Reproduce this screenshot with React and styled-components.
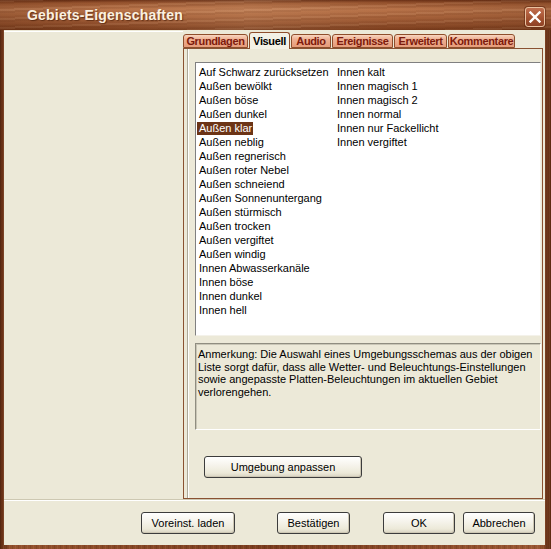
import React from 'react';
import styled, { createGlobalStyle } from 'styled-components';

const Global = createGlobalStyle`
  html, body { margin: 0; padding: 0; background: #6b3318; }
  body { width: 551px; height: 549px; overflow: hidden; font-family: "Liberation Sans", Arial, sans-serif; }
  * { box-sizing: border-box; }
`;

const Window = styled.div`
  width: 551px;
  height: 549px;
  display: flex;
  flex-direction: column;
  background:
    repeating-linear-gradient(90deg, rgba(0,0,0,0.10) 0 1px, transparent 1px 3px, rgba(255,220,180,0.08) 3px 4px, transparent 4px 6px),
    linear-gradient(90deg, #5e2a12 0%, #93502c 2%, #7a3c1e 50%, #9a5632 98%, #5a2810 100%);
`;

const TitleBar = styled.div`
  height: 30px;
  display: flex;
  align-items: flex-start;
  padding: 0 6px 0 27px;
  background:
    repeating-linear-gradient(178deg, rgba(255,230,200,0.07) 0 2px, rgba(60,20,0,0.08) 2px 4px, transparent 4px 7px, rgba(60,20,0,0.05) 7px 9px),
    linear-gradient(90deg, rgba(60,20,0,0.18) 0%, rgba(0,0,0,0) 20%, rgba(255,220,180,0.10) 45%, rgba(0,0,0,0) 70%, rgba(60,20,0,0.15) 100%),
    linear-gradient(180deg, #6a3016 0%, #9a5630 10%, #b9744a 30%, #a9643c 55%, #93512d 80%, #7a3c1c 100%);
`;

const Title = styled.span`
  margin-top: 7px;
  font-family: "Liberation Sans", Arial, sans-serif;
  font-weight: bold;
  font-size: 14px;
  letter-spacing: 0.2px;
  color: #fbf1e0;
  text-shadow: 1px 1px 1px rgba(60, 20, 0, 0.6);
`;

const CloseButton = styled.div`
  margin-left: auto;
  margin-top: 7px;
  width: 20px;
  height: 20px;
  border: 1px solid #e9c2a0;
  border-radius: 3px;
  background: linear-gradient(180deg, #c27050 0%, #a2502e 60%, #8e4226 100%);
  display: flex;
  align-items: center;
  justify-content: center;
  box-shadow: 0 0 0 1px rgba(90, 30, 10, 0.5);
`;

const Client = styled.div`
  flex: 1;
  margin: 0 6px 4px 4px;
  background: #ece9d8;
  display: flex;
  flex-direction: column;
`;

const Main = styled.div`
  height: 470px;
  display: flex;
  border-bottom: 1px solid #cdc8b2;
`;

const LeftPane = styled.div`
  width: 179px;
  border-top: 1px solid #ffffff;
  margin-top: 1px;
`;

const TabArea = styled.div`
  flex: 1;
  margin-right: 2px;
  padding-top: 4px;
  display: flex;
  flex-direction: column;
`;

const TabStrip = styled.div`
  height: 14px;
  display: flex;
  align-items: flex-end;
  gap: 1px;
  position: relative;
  z-index: 1;
`;

const Tab = styled.div`
  width: ${p => p.$w}px;
  height: ${p => (p.$active ? 17 : 14)}px;
  margin-bottom: ${p => (p.$active ? -1 : 0)}px;
  border: 1px solid #8e4e2c;
  border-bottom: ${p => (p.$active ? 'none' : '1px solid #8e4e2c')};
  border-radius: 3px 3px 0 0;
  background: ${p => (p.$active
    ? '#f3f1e6'
    : 'linear-gradient(180deg, #f8d6c0 0%, #eeb093 35%, #e69b79 100%)')};
  color: ${p => (p.$active ? '#000' : '#7e1a0c')};
  font-weight: bold;
  font-size: 11px;
  line-height: 12px;
  padding-top: ${p => (p.$active ? 2 : 0)}px;
  text-align: center;
  white-space: nowrap;
  letter-spacing: -0.35px;
  overflow: hidden;
`;

const Panel = styled.div`
  flex: 1;
  border: 1px solid #8a5232;
  background: #ece9d8;
  display: flex;
`;

const PanelInner = styled.div`
  flex: 1;
  margin-left: 3px;
  border-left: 1px solid #aca899;
  box-shadow: inset 1px 0 #ffffff;
  padding: 13px 1px 0 7px;
  display: flex;
  flex-direction: column;
`;

const ListBox = styled.div`
  height: 274px;
  background: #ffffff;
  border-top: 1px solid #808080;
  border-left: 1px solid #808080;
  border-right: 1px solid #f4f2ea;
  border-bottom: 1px solid #f4f2ea;
  padding: 3px 0 0 1px;
  display: grid;
  grid-auto-flow: column;
  grid-template-rows: repeat(18, 14px);
  grid-auto-columns: 138px;
  align-content: start;
`;

const Item = styled.div`
  justify-self: start;
  height: 13px;
  line-height: 13px;
  padding: 0 1px 0 2px;
  font-size: 11px;
  white-space: nowrap;
  color: ${p => (p.$sel ? '#ffffff' : '#000000')};
  background: ${p => (p.$sel ? '#6c3416' : 'transparent')};
`;

const Note = styled.div`
  margin-top: 7px;
  height: 87px;
  border-top: 1px solid #8f8d80;
  border-left: 1px solid #8f8d80;
  border-right: 1px solid #ffffff;
  border-bottom: 1px solid #ffffff;
  box-shadow: inset 1px 1px 0 #c9c6b6;
  padding: 4px 2px 0 2px;
  font-size: 11px;
  line-height: 12.5px;
  color: #000;
`;

const NoteLine = styled.span`
  display: block;
  white-space: nowrap;
`;

const Button = styled.button`
  width: ${p => p.$w}px;
  height: 22px;
  margin-left: ${p => p.$ml || 0}px;
  margin-top: ${p => p.$mt || 0}px;
  padding: 0;
  border: 1px solid #3c3c3c;
  border-radius: 3px;
  background: linear-gradient(180deg, #ffffff 0%, #f6f4ec 40%, #ece9d8 80%, #d8d3c2 100%);
  box-shadow: inset -1px -1px 0 #cdc7b4;
  font-family: "Liberation Sans", Arial, sans-serif;
  font-size: 11px;
  color: #000;
  flex: none;
`;

const Footer = styled.div`
  flex: 1;
  border-top: 1px solid #ffffff;
  display: flex;
  align-items: flex-start;
  justify-content: flex-end;
  padding: 11px 10px 0 0;
`;

const tabs = [
  { label: 'Grundlagen', w: 65 },
  { label: 'Visuell', w: 41, active: true },
  { label: 'Audio', w: 40 },
  { label: 'Ereignisse', w: 61 },
  { label: 'Erweitert', w: 53 },
  { label: 'Kommentare', w: 67 },
];

const items = [
  'Auf Schwarz zurücksetzen', 'Außen bewölkt', 'Außen böse', 'Außen dunkel', 'Außen klar',
  'Außen neblig', 'Außen regnerisch', 'Außen roter Nebel', 'Außen schneiend',
  'Außen Sonnenuntergang', 'Außen stürmisch', 'Außen trocken', 'Außen vergiftet',
  'Außen windig', 'Innen Abwasserkanäle', 'Innen böse', 'Innen dunkel', 'Innen hell',
  'Innen kalt', 'Innen magisch 1', 'Innen magisch 2', 'Innen normal',
  'Innen nur Fackellicht', 'Innen vergiftet',
];

const noteLines = [
  'Anmerkung: Die Auswahl eines Umgebungsschemas aus der obigen',
  'Liste sorgt dafür, dass alle Wetter- und Beleuchtungs-Einstellungen',
  'sowie angepasste Platten-Beleuchtungen im aktuellen Gebiet',
  'verlorengehen.',
];

export default function App() {
  return (
    <>
      <Global />
      <Window>
        <TitleBar>
          <Title>Gebiets-Eigenschaften</Title>
          <CloseButton>
            <svg width="12" height="12" viewBox="0 0 12 12">
              <path d="M1.5 1.5 L10.5 10.5 M10.5 1.5 L1.5 10.5" stroke="#ffffff" strokeWidth="2.4" strokeLinecap="square" />
            </svg>
          </CloseButton>
        </TitleBar>
        <Client>
          <Main>
            <LeftPane />
            <TabArea>
              <TabStrip>
                {tabs.map(t => (
                  <Tab key={t.label} $w={t.w} $active={t.active}>{t.label}</Tab>
                ))}
              </TabStrip>
              <Panel>
                <PanelInner>
                  <ListBox>
                    {items.map(it => (
                      <Item key={it} $sel={it === 'Außen klar'}>{it}</Item>
                    ))}
                  </ListBox>
                  <Note>
                    {noteLines.map(l => <NoteLine key={l}>{l}</NoteLine>)}
                  </Note>
                  <Button $w={158} $ml={9} $mt={26}>Umgebung anpassen</Button>
                </PanelInner>
              </Panel>
            </TabArea>
          </Main>
          <Footer>
            <Button $w={94}>Voreinst. laden</Button>
            <Button $w={73} $ml={42}>Bestätigen</Button>
            <Button $w={72} $ml={33}>OK</Button>
            <Button $w={72} $ml={8}>Abbrechen</Button>
          </Footer>
        </Client>
      </Window>
    </>
  );
}
